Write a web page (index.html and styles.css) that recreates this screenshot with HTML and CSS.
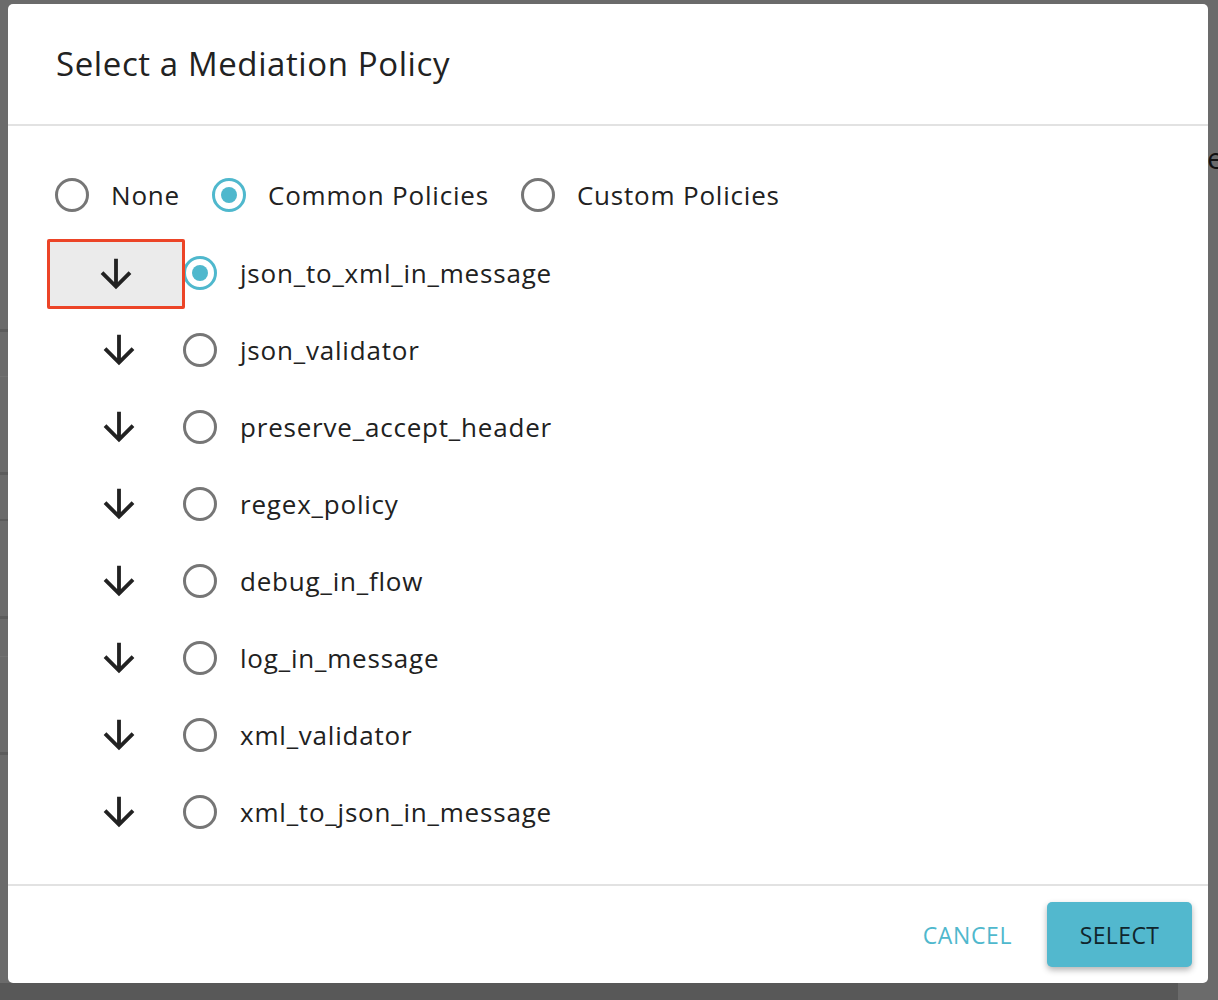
FILE: index.html
```html
<!DOCTYPE html>
<html>
<head>
<meta charset="utf-8">
<link rel="stylesheet" href="styles.css">
</head>
<body>
<div class="peek">e</div>
<div class="dialog">
  <div class="dialog-header">
    <h2 class="title">Select a Mediation Policy</h2>
  </div>
  <div class="dialog-content">
    <div class="group-row">
      <label class="opt"><span class="radio"></span><span class="opt-label">None</span></label>
      <label class="opt"><span class="radio checked"></span><span class="opt-label">Common Policies</span></label>
      <label class="opt"><span class="radio"></span><span class="opt-label">Custom Policies</span></label>
    </div>
    <div class="policy-list">
      <div class="policy-row">
        <div class="dl-btn dl-active"><svg class="arrow" viewBox="0 0 24 24"><path d="M20 12l-1.41-1.41L13 16.17V4h-2v12.17l-5.58-5.59L4 12l8 8 8-8z"/></svg></div>
        <span class="radio checked"></span><span class="policy-label">json_to_xml_in_message</span>
      </div>
      <div class="policy-row">
        <div class="dl-btn"><svg class="arrow" viewBox="0 0 24 24"><path d="M20 12l-1.41-1.41L13 16.17V4h-2v12.17l-5.58-5.59L4 12l8 8 8-8z"/></svg></div>
        <span class="radio"></span><span class="policy-label">json_validator</span>
      </div>
      <div class="policy-row">
        <div class="dl-btn"><svg class="arrow" viewBox="0 0 24 24"><path d="M20 12l-1.41-1.41L13 16.17V4h-2v12.17l-5.58-5.59L4 12l8 8 8-8z"/></svg></div>
        <span class="radio"></span><span class="policy-label">preserve_accept_header</span>
      </div>
      <div class="policy-row">
        <div class="dl-btn"><svg class="arrow" viewBox="0 0 24 24"><path d="M20 12l-1.41-1.41L13 16.17V4h-2v12.17l-5.58-5.59L4 12l8 8 8-8z"/></svg></div>
        <span class="radio"></span><span class="policy-label">regex_policy</span>
      </div>
      <div class="policy-row">
        <div class="dl-btn"><svg class="arrow" viewBox="0 0 24 24"><path d="M20 12l-1.41-1.41L13 16.17V4h-2v12.17l-5.58-5.59L4 12l8 8 8-8z"/></svg></div>
        <span class="radio"></span><span class="policy-label">debug_in_flow</span>
      </div>
      <div class="policy-row">
        <div class="dl-btn"><svg class="arrow" viewBox="0 0 24 24"><path d="M20 12l-1.41-1.41L13 16.17V4h-2v12.17l-5.58-5.59L4 12l8 8 8-8z"/></svg></div>
        <span class="radio"></span><span class="policy-label">log_in_message</span>
      </div>
      <div class="policy-row">
        <div class="dl-btn"><svg class="arrow" viewBox="0 0 24 24"><path d="M20 12l-1.41-1.41L13 16.17V4h-2v12.17l-5.58-5.59L4 12l8 8 8-8z"/></svg></div>
        <span class="radio"></span><span class="policy-label">xml_validator</span>
      </div>
      <div class="policy-row">
        <div class="dl-btn"><svg class="arrow" viewBox="0 0 24 24"><path d="M20 12l-1.41-1.41L13 16.17V4h-2v12.17l-5.58-5.59L4 12l8 8 8-8z"/></svg></div>
        <span class="radio"></span><span class="policy-label">xml_to_json_in_message</span>
      </div>
    </div>
  </div>
  <div class="dialog-footer">
    <button class="btn-cancel">CANCEL</button>
    <button class="btn-select">SELECT</button>
  </div>
</div>
</body>
</html>
```
FILE: styles.css
```css
html, body {
  margin: 0;
  padding: 0;
}
body {
  width: 1218px;
  height: 1000px;
  overflow: hidden;
  position: relative;
  font-family: "Open Sans", "Liberation Sans", sans-serif;
  color: #212121;
  background-color: #6b6b6b;
  background-image:
    linear-gradient(#5c5c5c, #5c5c5c),
    linear-gradient(#727272, #727272),
    linear-gradient(#5c5c5c, #5c5c5c),
    linear-gradient(#5c5c5c, #5c5c5c),
    linear-gradient(#5c5c5c, #5c5c5c),
    linear-gradient(#727272, #727272),
    linear-gradient(#5c5c5c, #5c5c5c),
    linear-gradient(#585858, #585858);
  background-size: 8px 3px, 8px 1px, 8px 3px, 8px 2px, 8px 3px, 8px 1px, 8px 3px, 1178px 17px;
  background-position: 0 329px, 0 376px, 0 472px, 0 519px, 0 616px, 0 656px, 0 752px, 0 983px;
  background-repeat: no-repeat;
}
.peek {
  position: absolute;
  left: 1207px;
  top: 138px;
  font-size: 30px;
  color: #111;
  line-height: 40px;
}
.dialog {
  position: relative;
  margin: 4px 0 0 8px;
  width: 1200px;
  height: 979px;
  background: #fff;
  border-radius: 5px;
  display: flex;
  flex-direction: column;
  box-sizing: border-box;
}
.dialog-header {
  height: 118px;
  border-bottom: 2px solid #e2e2e2;
  display: flex;
  align-items: center;
  padding-left: 48px;
  padding-bottom: 2px;
}
.title {
  margin: 0;
  font-size: 33px;
  font-weight: 400;
  letter-spacing: 0.6px;
  color: #222;
}
.dialog-content {
  flex: 1;
  padding: 46px 0 0 47px;
}
.group-row {
  height: 46px;
  display: flex;
  align-items: center;
}
.opt {
  display: flex;
  align-items: center;
  margin-right: 32px;
}
.opt-label {
  margin-left: 22px;
  font-size: 26px;
  letter-spacing: 0.8px;
}
.radio {
  width: 34px;
  height: 34px;
  box-sizing: border-box;
  border: 3px solid #767676;
  border-radius: 50%;
  display: inline-flex;
  align-items: center;
  justify-content: center;
  flex: none;
}
.radio.checked {
  border-color: #4fb8cd;
}
.radio.checked::after {
  content: "";
  width: 16px;
  height: 16px;
  border-radius: 50%;
  background: #4fb8cd;
}
.policy-list {
  margin-top: 16px;
}
.policy-row {
  height: 77px;
  display: flex;
  align-items: center;
}
.dl-btn {
  width: 128px;
  height: 70px;
  display: flex;
  align-items: center;
  justify-content: center;
  box-sizing: border-box;
  flex: none;
}
.dl-active {
  background: #ebebeb;
  border: 3px solid #ec4427;
  border-radius: 2px;
  width: 138px;
  margin-left: -8px;
  margin-right: -2px;
  margin-top: 2px;
  position: relative;
  z-index: 0;
}
.arrow {
  width: 46px;
  height: 46px;
  fill: #222;
}
.policy-label {
  margin-left: 23px;
  font-size: 26px;
  letter-spacing: 0.8px;
}
.dialog-footer {
  height: 99px;
  border-top: 2px solid #e2e2e2;
  display: flex;
  align-items: center;
  justify-content: flex-end;
  padding-right: 16px;
  box-sizing: border-box;
}
.btn-cancel {
  border: none;
  background: none;
  font-family: inherit;
  font-size: 23px;
  letter-spacing: 0.6px;
  color: #4fb8cd;
  padding: 0;
  margin-right: 35px;
}
.btn-select {
  width: 145px;
  height: 65px;
  border: none;
  border-radius: 5px;
  background: #52b8ce;
  color: #10252c;
  font-family: inherit;
  font-size: 23px;
  letter-spacing: 0.4px;
  box-shadow: 0 3px 6px rgba(0,0,0,0.3);
}
```
